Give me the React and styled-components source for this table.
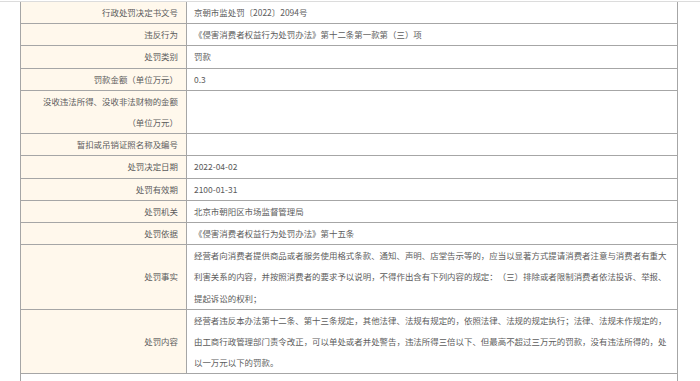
import React from "react";
import styled, { createGlobalStyle } from "styled-components";

const rows = [
    { label: "行政处罚决定书文号", value: "京朝市监处罚〔2022〕2094号" },
    { label: "违反行为", value: "《侵害消费者权益行为处罚办法》第十二条第一款第（三）项" },
    { label: "处罚类别", value: "罚款" },
    { label: "罚款金额（单位万元）", value: "0.3" },
    { label: "没收违法所得、没收非法财物的金额（单位万元）", value: "" },
    { label: "暂扣或吊销证照名称及编号", value: "" },
    { label: "处罚决定日期", value: "2022-04-02" },
    { label: "处罚有效期", value: "2100-01-31" },
    { label: "处罚机关", value: "北京市朝阳区市场监督管理局" },
    { label: "处罚依据", value: "《侵害消费者权益行为处罚办法》第十五条" },
    {
        label: "处罚事实",
        value: "经营者向消费者提供商品或者服务使用格式条款、通知、声明、店堂告示等的，应当以显著方式提请消费者注意与消费者有重大利害关系的内容，并按照消费者的要求予以说明，不得作出含有下列内容的规定：（三）排除或者限制消费者依法投诉、举报、提起诉讼的权利；",
    },
    {
        label: "处罚内容",
        value: "经营者违反本办法第十二条、第十三条规定，其他法律、法规有规定的，依照法律、法规的规定执行；法律、法规未作规定的，由工商行政管理部门责令改正，可以单处或者并处警告，违法所得三倍以下、但最高不超过三万元的罚款，没有违法所得的，处以一万元以下的罚款。",
    },
];

const GlobalStyle = createGlobalStyle`
    html, body {
        margin: 0;
        padding: 0;
        background: #ffffff;
    }
    body {
        font-family: "Noto Sans CJK SC", "Liberation Sans", sans-serif;
        overflow: hidden;
    }
`;

const Page = styled.div`
    width: 700px;
    height: 381px;
    overflow: hidden;
    padding-top: 1px;
    box-sizing: border-box;
`;

const TopRule = styled.div`
    height: 1px;
    background: #dcdcdc;
`;

const Table = styled.table`
    margin-left: 20px;
    width: 658px;
    border-collapse: collapse;
    table-layout: fixed;
    border-left: 1px solid #a6a6a6;
    border-right: 1px solid #a6a6a6;
    font-size: 8.45px;
    line-height: 21.2px;
    color: #5c5c5c;
    text-spacing-trim: space-all;
`;

const Label = styled.td`
    width: 149px;
    padding: 0 8px;
    text-align: right;
    vertical-align: middle;
    background: #fff8ec;
    border-bottom: 1px solid #a6a6a6;
    border-right: 1px solid #a6a6a6;
`;

const Value = styled.td`
    padding: 0 6px 0 7px;
    text-align: left;
    vertical-align: middle;
    border-bottom: 1px solid #a6a6a6;
    word-break: break-all;
`;

const Filler = styled.td`
    height: 20px;
    padding: 0;
`;

export default function App() {
    return (
        <>
            <GlobalStyle />
            <Page>
                <TopRule />
                <Table>
                    <tbody>
                        {rows.map((r) => (
                            <tr key={r.label}>
                                <Label>{r.label}</Label>
                                <Value>{r.value}</Value>
                            </tr>
                        ))}
                        <tr>
                            <Filler colSpan={2} />
                        </tr>
                    </tbody>
                </Table>
            </Page>
        </>
    );
}
